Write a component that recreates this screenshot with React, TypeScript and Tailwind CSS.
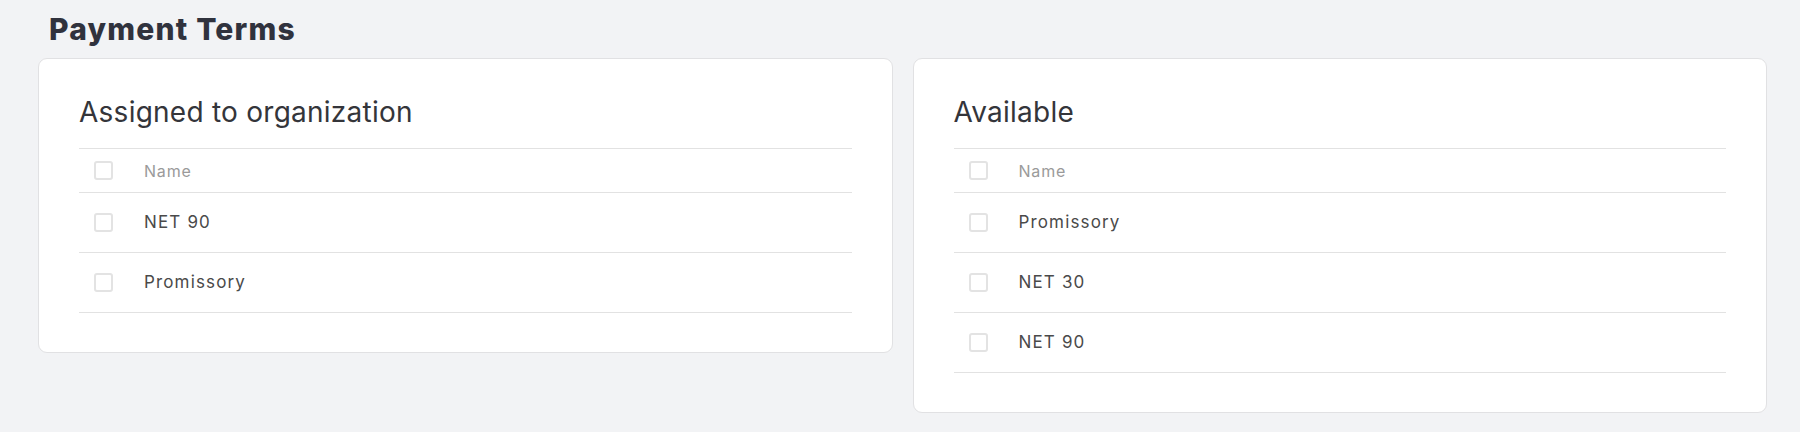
import React from "react";

interface TermsCardProps {
  title: string;
  items: string[];
}

function Checkbox() {
  return <span className="block w-[19px] h-[19px] rounded-[3px] border-2 border-[#e3e3e3] bg-white" />;
}

function TermsCard({ title, items }: TermsCardProps) {
  return (
    <div className="bg-white border border-[#e1e1e3] rounded-[9px] pt-[35px] px-[40px] pb-[39px]">
      <h2 className="text-[28px] leading-[36px] text-[#34353a] font-normal tracking-[0.25px] mb-[18px]">{title}</h2>
      <div className="border-t border-[#e2e2e2]">
        <div className="flex items-center h-[44px] border-b border-[#e2e2e2]">
          <div className="w-[65px] pl-[15px]">
            <Checkbox />
          </div>
          <span className="text-[16px] tracking-[0.8px] text-[#9a9a9a]">Name</span>
        </div>
        {items.map((item) => (
          <div key={item} className="flex items-center h-[60px] border-b border-[#e2e2e2]">
            <div className="w-[65px] pl-[15px]">
              <Checkbox />
            </div>
            <span className="text-[17px] tracking-[1.15px] text-[#4a4a4a]">{item}</span>
          </div>
        ))}
      </div>
    </div>
  );
}

export default function App() {
  return (
    <div className="min-h-[432px] bg-[#f2f3f5] pl-[38px] pr-[33px] pt-[11px] pb-[18px]" style={{ fontFamily: "Inter, 'Noto Sans', sans-serif" }}>
      <h1 className="text-[30px] leading-[36px] font-extrabold text-[#30323d] pl-[11px] mb-[11px] tracking-[1.2px]">Payment Terms</h1>
      <div className="grid grid-cols-2 gap-[20px] items-start">
        <TermsCard title="Assigned to organization" items={["NET 90", "Promissory"]} />
        <TermsCard title="Available" items={["Promissory", "NET 30", "NET 90"]} />
      </div>
    </div>
  );
}
